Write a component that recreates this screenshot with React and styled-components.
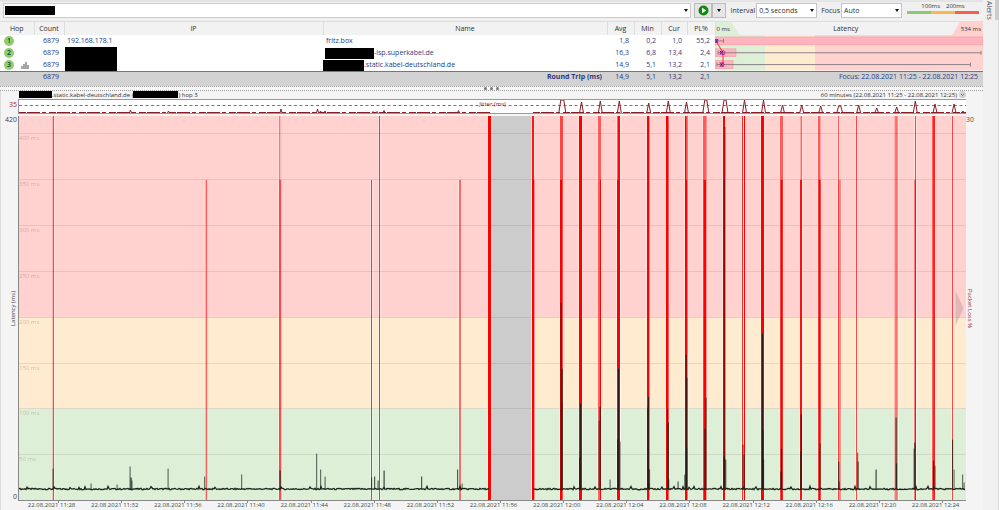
import * as React from 'react';
import styled, { createGlobalStyle } from 'styled-components';

const hops = [
    { hop: 1, ip: '192.168.178.1', name: 'fritz.box', avg: '1,8', min: '0,2', cur: '1,0', loss: '55,2' },
    { hop: 2, hidden: 49, indent: 2, name: '-isp.superkabel.de', avg: '16,3', min: '6,8', cur: '13,4', loss: '2,4' },
    { hop: 3, graph: true, hidden: 41, indent: 0, name: '.static.kabel-deutschland.de', avg: '14,9', min: '5,1', cur: '13,2', loss: '2,1' },
];

const times = [
    '11:28', '11:32', '11:36', '11:40', '11:44', '11:48', '11:52', '11:56',
    '12:00', '12:04', '12:08', '12:12', '12:16', '12:20', '12:24',
];

const levels = [400, 350, 300, 250, 200, 150, 100, 50];

// Packet loss bars: x, width, top, opacity
const losses = [
    [33.7, 1.3, 0, .7], [186.6, 1.6, 64, .6], [260.3, 1, 0, .7], [260.3, 2, 64, .6],
    [352, 1, 64, .8], [360, 1, 0, .8], [440, 2, 64, .55],
    [469, 3, 0, 1], [513, 2, 0, .9], [513, 2.4, 64, 1],
    [541, 3, 0, .7], [541, 2, 64, 1], [560, 3, 0, 1],
    [579, 3, 0, .6], [581, 1, 64, 1], [598, 3, 0, .6], [599, 2, 0, .9], [598, 3, 64, 1],
    [628, 2.4, 0, 1], [647, 2.6, 0, 1], [666, 1.6, 0, 1], [667.5, 1.5, 0, .5], [667, 1, 64, 1],
    [684, 3.6, 0, .6], [684.6, 2.4, 64, 1], [704, 2, 0, 1],
    [723, 1, 0, .8], [725, 1, 0, 1], [742, 3, 0, 1],
    [761, 3, 0, .6], [761.6, 2, 64, 1], [781.6, 1.2, 0, .7], [781, 2, 64, .9],
    [799, 2.5, 0, .6], [799.6, 2, 64, 1], [819, 1, 0, .6], [819, 3, 64, .4],
    [837, 1, 0, .7], [875.4, 3.6, 0, .4], [876.6, 1, 0, .4],
    [896, 1, 0, .7], [895.4, 1.6, 64, .8], [913, 3, 0, .6], [914.4, 1.4, 0, .9],
    [933, 1, 0, .7],
];

// Latency spikes: x, top, opacity
const spikes = [
    [34, 353, .6], [72, 368, .6], [98, 369, .6], [111, 351, .6], [112, 362, .9], [113, 365, .5],
    [149, 353, .6], [185.5, 361, .6], [222.5, 359, .6], [261, 355, .8], [297.5, 338, .6], [301.5, 354, .6], [306, 361, .6],
    [352.5, 362, .6], [355.5, 361, .7], [359, 365, .7], [365, 355, .8], [402.5, 361, .7], [438.5, 354, .7], [443, 368, .6],
    [542, 187, .6], [543.3, 253, .6], [542.6, 287, .7], [561.5, 288, .8], [560.5, 342, .7],
    [581, 291, .8], [580, 305, .5], [599.5, 253, .8], [598.5, 324, .7], [601, 326, .5], [591, 364, .6], [630, 368, .6],
    [629.5, 281, .8], [628.5, 292, .7], [630.4, 354, .6], [648.5, 293, .7], [649.3, 307, .7], [649.6, 364, .7], [659, 366, .7],
    [667, 239, .7], [667.8, 262, .7], [667.5, 332, .7], [665.6, 359, .6], [686, 313, .8], [687, 282, .6],
    [705, 64, .4], [706, 11, .5], [705, 341, .8], [706.6, 344, .7], [724, 329, .7], [725, 339, .7],
    [743.4, 218, .8], [743.8, 314, .7], [744.5, 344, .5], [762.4, 333, .8], [761.8, 356, .7],
    [782.2, 299, .8], [781.8, 336, .7], [801, 328, .6], [819.6, 346, .7], [820, 366, .7],
    [838.5, 337, .6], [839, 346, .7], [857, 354, .8], [877, 302, .7], [877.4, 348, .7], [895.8, 327, .8], [895, 333, .6],
    [914.4, 345, .7], [916, 350, .6], [933.5, 324, .7], [935, 354, .5], [943.5, 359, .6], [945, 367, .6],
];

// Jitter peaks: x, top, half of the width at the top
const peaks = [
    [34, 12, 0], [72, 12, 0], [111.5, 10, 0], [149.5, 11, 0], [186, 12, 0], [223, 12, 0], [262, 9, 0],
    [298.5, 9, 0], [301.5, 11, 0], [306, 11, 0], [354, 11.5, 0], [358, 11.5, 0], [365, 10.5, 0], [402, 12, 0], [439.5, 10.5, 0],
    [543.3, 0, 1.5], [562.5, 2, 0], [581.3, 1, 0], [600.3, 1, 0], [629.7, 3, 0], [649.3, 1, 0], [667.5, 2, 0],
    [686.8, 0, 1], [706, 0, 1], [725.5, 0, 0], [744.5, 0, 0], [763.5, 5, 0], [782.7, 5, 0], [801.7, 6, 0],
    [820.7, 6, 1], [839.7, 5, 0], [857.7, 8, 0], [877.7, 7, 0], [896.3, 1, 0], [916, 4, 0], [935, 4, 0], [944, 11, 0],
];

const noise = (x) => {
    const value = Math.sin(x * 12.9898) * 43758.5453;
    return value - Math.floor(value);
};

const baseline = (from, to) => {
    let path = `M${from} 373.5`;
    for (let x = from + 1; x <= to; x++) {
        const jump = noise(x + 500) > .97 ? 2 : 0;
        path += `L${x} ${(374.2 - noise(x) * 1.4 - jump).toFixed(1)}`;
    }
    return path;
};

const jitterLine = (list) => list.reduce((path, [x, top, flat]) => {
    const foot = top > 8 ? 1 : 2;
    return `${path}M${x - foot - flat} 13L${x - flat} ${top}H${x + flat}L${x + foot + flat} 13`;
}, '');

const App = () => (
    <Window>
        <GlobalStyle/>
        <Main>
            <Toolbar/>
            <TraceTable/>
            <Splitter><i/><i/><i/></Splitter>
            <Timeline/>
        </Main>
        <Sidebar>
            <AlertsTab type="button">Alerts</AlertsTab>
        </Sidebar>
    </Window>
);

export default App;

const Toolbar = () => (
    <Bar>
        <Address>
            <Redacted $width={50} $height={9}/>
            <AddressInput aria-label="Target"/>
            <Caret/>
        </Address>
        <Buttons>
            <ToolButton type="button" aria-label="Start" $width={18}>
                <svg width="11" height="11" viewBox="0 0 11 11">
                    <circle cx="5.5" cy="5.5" r="5" fill="#108a10"/>
                    <path d="M4 2.8L8.2 5.5L4 8.2Z" fill="#ffffff"/>
                </svg>
            </ToolButton>
            <ToolButton type="button" aria-label="Start options" $width={14}><Caret/></ToolButton>
        </Buttons>
        <Label htmlFor="interval">Interval</Label>
        <Field>
            <Select id="interval"><option>0,5 seconds</option></Select>
            <Caret/>
        </Field>
        <Label htmlFor="focus">Focus</Label>
        <Field>
            <Select id="focus"><option>Auto</option></Select>
            <Caret/>
        </Field>
        <Legend>
            <LegendTexts><span>100ms</span><span>200ms</span></LegendTexts>
            <LegendBar/>
        </Legend>
    </Bar>
);

const TraceTable = () => (
    <Table>
        <colgroup>
            <Col $width={34}/><Col $width={30}/><Col $width={259}/><col/>
            <Col $width={27}/><Col $width={27}/><Col $width={26}/><Col $width={28}/><Col $width={268}/>
        </colgroup>
        <thead>
            <tr>
                <Head>Hop</Head><Head>Count</Head><Head>IP</Head><Head>Name</Head>
                <Head>Avg</Head><Head>Min</Head><Head>Cur</Head><Head>PL%</Head>
                <Head>
                    <Scale>
                        <ScaleEnd>0 ms</ScaleEnd>
                        <span>Latency</span>
                        <ScaleEnd $high>534 ms</ScaleEnd>
                    </Scale>
                </Head>
            </tr>
        </thead>
        <tbody>
            { hops.map((row) =>
                <tr key={row.hop}>
                    <Cell>
                        <HopCell>
                            <Badge>{ row.hop }</Badge>
                            { row.graph &&
                                <svg width="8" height="7" viewBox="0 0 8 7" stroke="#777777" strokeWidth="1.3">
                                    <path d="M1 7V4M3 7V2M5 7V0M7 7V3"/>
                                </svg>
                            }
                        </HopCell>
                    </Cell>
                    <Cell $align="right">6879</Cell>
                    <Cell $pad={row.ip ? 3 : 1}>{ row.ip || <Redacted $width={52} $height={12}/> }</Cell>
                    <Cell $pad={row.hidden ? 0 : 3}>
                        <NameCell $indent={row.indent}>
                            { row.hidden && <Redacted $width={row.hidden} $height={11}/> }
                            { row.name }
                        </NameCell>
                    </Cell>
                    <Cell $align="right">{ row.avg }</Cell>
                    <Cell $align="right">{ row.min }</Cell>
                    <Cell $align="right">{ row.cur }</Cell>
                    <Cell $align="right">{ row.loss }</Cell>
                    { row.hop === 1 && <ChartCell rowSpan={3}><LatencyChart/></ChartCell> }
                </tr>
            )}
        </tbody>
        <tfoot>
            <tr>
                <Total/><Total>6879</Total><Total/>
                <Total $strong>Round Trip (ms)</Total>
                <Total>14,9</Total><Total>5,1</Total><Total>13,2</Total><Total>2,1</Total>
                <Total>Focus: 22.08.2021 11:25 - 22.08.2021 12:25</Total>
            </tr>
        </tfoot>
    </Table>
);

const LatencyChart = () => (
    <Drawing viewBox="0 0 268 36" preserveAspectRatio="none">
        <rect width="50" height="36" fill="#deefd7"/>
        <rect x="50" width="50" height="36" fill="#ffebcf"/>
        <rect x="100" width="168" height="36" fill="#ffd2d0"/>
        <g fill="#ffb3bf" stroke="#f59a9f" strokeWidth=".6">
            <rect x="0" y="2" width="268" height="8"/>
            <rect x="0" y="14" width="21" height="8"/>
            <rect x="0" y="26" width="18" height="8"/>
        </g>
        <path d="M0 6H8.5M8.5 4V8M3 18H266M3 16V20M266 16V20M2 30H255.5M2 28V32M255.5 28V32" stroke="#8c8088" fill="none"/>
        <path d="M1 6L8 18V30" stroke="#ff3030" fill="none"/>
        <path d="M0 4L3 8M3 4L0 8M5 16L8 20M8 16L5 20M5 28L8 32M8 28L5 32" stroke="#1717e0"/>
        <g fill="none" stroke="#d0208a"><circle cx="1" cy="6" r="1.5"/><circle cx="8" cy="18" r="2"/><circle cx="7" cy="30" r="2"/></g>
    </Drawing>
);

const Timeline = () => (
    <Graph>
        <Caption>
            <Redacted $width={33} $height={7}/>
            <span>.static.kabel-deutschland.de (</span>
            <Redacted $width={45} $height={7}/>
            <span>) hop 3</span>
            <Period>60 minutes (22.08.2021 11:25 - 22.08.2021 12:25)</Period>
            <Fold type="button" aria-label="Collapse">
                <svg width="7" height="7" viewBox="0 0 7 7">
                    <circle cx="3.5" cy="3.5" r="3.5" fill="#d2d2d2"/>
                    <path d="M2 3L3.5 4.5L5 3" stroke="#777777" fill="none"/>
                </svg>
            </Fold>
        </Caption>
        <JitterRow>
            <Gutter><Tick $red>35</Tick></Gutter>
            <Jitter>
                <Drawing viewBox="0 0 947 13" preserveAspectRatio="none">
                    <path d="M0 5.5H947" stroke="#777777" strokeDasharray="3 2.5"/>
                    <path d="M0 12.5H471M514 12.5H947" stroke="#8b1c24" strokeDasharray="7 1 13 2 4 3"/>
                    <path d={jitterLine(peaks)} stroke="#8b1c24" fill="none"/>
                </Drawing>
                <JitterName>Jitter (ms)</JitterName>
            </Jitter>
            <Gutter $right/>
        </JitterRow>
        <PlotRow>
            <Gutter>
                <Tick>420</Tick>
                <AxisName $up>Latency (ms)</AxisName>
                <Tick>0</Tick>
            </Gutter>
            <Plot>
                <Drawing viewBox="0 0 947 385" preserveAspectRatio="none">
                    <rect width="947" height="202" fill="#ffd2d0"/>
                    <rect y="202" width="947" height="91" fill="#ffebcf"/>
                    <rect y="293" width="947" height="92" fill="#deefd7"/>
                    <rect x="471" width="42" height="385" fill="#cccccc"/>
                    { losses.map(([x, width, top], i) =>
                        <rect key={i} x={x - .8} y={top} width={width + 1.6} height={385 - top} fill="#ffffff" opacity=".4"/>
                    )}
                    { losses.map(([x, width, top, opacity], i) =>
                        <rect key={i} x={x} y={top} width={width} height={385 - top} fill="#ff0000" opacity={opacity}/>
                    )}
                    { spikes.map(([x, top, opacity], i) =>
                        <rect key={i} x={x - .5} y={top} width="1.2" height={374 - top} fill="#101c14" opacity={opacity}/>
                    )}
                    <path d={baseline(0, 470)} stroke="#1c261c" fill="none" strokeWidth="1.3"/>
                    <path d={baseline(514, 946)} stroke="#1c261c" fill="none" strokeWidth="1.3"/>
                    <path d="M936.5 175L944.5 192.5L936.5 210Z" fill="#b99" opacity=".45"/>
                </Drawing>
                <Levels>
                    { levels.map((level) => <Level key={level}>{ level } ms</Level>) }
                </Levels>
            </Plot>
            <Gutter $right>
                <Tick $red>30</Tick>
                <AxisName $red>Packet Loss %</AxisName>
                <Tick/>
            </Gutter>
        </PlotRow>
        <Times>
            { times.map((time) => <Time key={time}>22.08.2021 { time }</Time>) }
        </Times>
    </Graph>
);

const GlobalStyle = createGlobalStyle`
    * {
        box-sizing: border-box;
    }

    body {
        margin: 0;
        background: #f0f0f0;
        font: 7px/10px "Open Sans", "Noto Sans", sans-serif;
        color: #303030;
    }

    button, input, select {
        font: inherit;
        color: inherit;
    }
`;

const Window = styled.div`
    display: flex;
    min-height: 100vh;
`;

const Main = styled.main`
    flex: 1;
    min-width: 0;
    display: flex;
    flex-direction: column;
`;

const Sidebar = styled.aside`
    width: 16px;
    border-right: 1px solid #dcdcdc;
`;

const AlertsTab = styled.button`
    display: block;
    width: 16px;
    height: 20px;
    padding: 0;
    border: 0;
    border-right: 4px solid #cccccc;
    background: none;
    color: #555555;
    writing-mode: vertical-rl;
    line-height: 12px;
`;

const Bar = styled.div`
    display: flex;
    align-items: center;
    height: 22px;
    padding: 0 3px 2px;
    border-top: 2px solid #e4e4e4;
    border-bottom: 1px solid #dddddd;
`;

const Address = styled.div`
    flex: 1;
    display: flex;
    align-items: center;
    height: 15px;
    padding: 0 2px 0 1px;
    border: 1px solid #cccccc;
    background: #ffffff;
`;

const AddressInput = styled.input`
    flex: 1;
    min-width: 0;
    height: 11px;
    border: 0;
    outline: 0;
    background: none;
`;

const Redacted = styled.span`
    flex: none;
    display: block;
    width: ${({ $width }) => $width}px;
    height: ${({ $height }) => $height}px;
    background: #000000;
`;

const Caret = styled.span`
    border: 2px solid transparent;
    border-top: 3px solid #111111;
    border-bottom: 0;
    pointer-events: none;
`;

const Buttons = styled.div`
    display: flex;
    margin-left: 3px;
`;

const ToolButton = styled.button`
    display: flex;
    align-items: center;
    justify-content: center;
    width: ${({ $width }) => $width}px;
    height: 15px;
    padding: 0;
    border: 1px solid #bbbbbb;
    background: #e6e6e6;
`;

const Label = styled.label`
    margin: 0 1px 0 4px;
`;

const Field = styled.div`
    display: flex;
    align-items: center;
    width: 61px;
    height: 15px;
    padding-right: 2px;
    border: 1px solid #c4c4c4;
    background: #ffffff;
`;

const Select = styled.select`
    appearance: none;
    flex: 1;
    min-width: 0;
    height: 12px;
    padding: 0 0 0 2px;
    border: 0;
    background: none;
`;

const Legend = styled.div`
    align-self: flex-start;
    width: 72px;
    margin: 0 1px 0 5px;
`;

const LegendTexts = styled.div`
    display: flex;
    justify-content: center;
    gap: 6px;
    font-size: 6px;
    line-height: 9px;
`;

const LegendBar = styled.div`
    height: 3px;
    background: linear-gradient(to right, #8fc96f 33%, #f8b84c 33% 66%, #f8604c 66%);
`;

const Table = styled.table`
    width: 100%;
    table-layout: fixed;
    border-collapse: collapse;
    background: #ffffff;
    color: #2b3a80;
`;

const Col = styled.col`
    width: ${({ $width }) => $width}px;
`;

const Head = styled.th`
    height: 13px;
    padding: 0;
    border-right: 1px solid #dddddd;
    background: #f2f2f2;
    color: #303030;
    font-weight: normal;

    &:last-child {
        border: 0;
    }
`;

const Scale = styled.div`
    display: flex;
    align-items: center;
    justify-content: space-between;
    line-height: 11px;
`;

const ScaleEnd = styled.span`
    width: ${({ $high }) => $high ? 31 : 24}px;
    height: 13px;
    padding: ${({ $high }) => $high ? '2px 2px 0 0' : '2px 0 0 1px'};
    background: ${({ $high }) => $high ? '#ffd2d0' : '#deefd7'};
    clip-path: ${({ $high }) => $high ? 'polygon(8px 0, 100% 0, 100% 100%, 0 100%)' : 'polygon(0 0, 16px 0, 100% 100%, 0 100%)'};
    font-size: 6px;
    text-align: ${({ $high }) => $high ? 'right' : 'left'};
    white-space: nowrap;
`;

const Cell = styled.td`
    height: 12px;
    padding: 0 5px 0 ${({ $pad = 3 }) => $pad}px;
    line-height: 12px;
    text-align: ${({ $align = 'left' }) => $align};
    white-space: nowrap;
`;

const HopCell = styled.div`
    display: flex;
    align-items: center;
    gap: 7px;
    padding-left: 1px;
`;

const Badge = styled.span`
    width: 10px;
    height: 10px;
    border-radius: 50%;
    background: #8fce6c;
    color: #22403c;
    font-weight: 600;
    line-height: 10px;
    text-align: center;
`;

const NameCell = styled.div`
    display: flex;
    align-items: center;
    margin-left: ${({ $indent = 0 }) => $indent}px;
`;

const ChartCell = styled.td`
    height: 36px;
    padding: 0;
`;

const Drawing = styled.svg`
    display: block;
    width: 100%;
    height: 100%;
`;

const Total = styled.td`
    height: 14px;
    padding: 0 5px 0 0;
    border-top: 1px solid #777777;
    background: #d2d2d2;
    font-weight: ${({ $strong }) => $strong ? 'bold' : 'normal'};
    line-height: 10px;
    text-align: right;
    vertical-align: top;
    white-space: nowrap;
`;

const Splitter = styled.div`
    display: flex;
    align-items: center;
    justify-content: center;
    gap: 3px;
    height: 5px;
    border: 1px dotted #999999;
    border-width: 1px 0;
    background: #f6f6f6;

    i {
        width: 3px;
        height: 3px;
        border-radius: 50%;
        background: #777777;
    }
`;

const Graph = styled.section`
    flex: 1;
    display: flex;
    flex-direction: column;
    border-left: 1px solid #dddddd;
    background: #f4f4f4;
`;

const Caption = styled.header`
    display: flex;
    align-items: center;
    height: 8px;
    padding: 0 17px 0 18px;
    font-size: 6px;
    line-height: 8px;
    white-space: nowrap;
`;

const Period = styled.span`
    margin-left: auto;
`;

const Fold = styled.button`
    display: flex;
    margin-left: 2px;
    padding: 0;
    border: 0;
    background: none;
`;

const JitterRow = styled.div`
    display: flex;
    height: 15px;
    margin-bottom: 2px;
`;

const PlotRow = styled.div`
    flex: 1;
    display: flex;
    min-height: 200px;
`;

const Gutter = styled.div`
    flex: none;
    display: flex;
    flex-direction: column;
    justify-content: space-between;
    align-items: ${({ $right }) => $right ? 'flex-start' : 'flex-end'};
    width: 17px;
    padding-right: ${({ $right }) => $right ? 0 : 1}px;
`;

const Tick = styled.span`
    min-height: 8px;
    color: ${({ $red }) => $red ? '#b02832' : '#404040'};
    line-height: 8px;

    ${JitterRow} & {
        padding-top: 2px;
    }
`;

const AxisName = styled.span`
    color: ${({ $red }) => $red ? '#b02832' : '#404040'};
    font-size: 6px;
    line-height: 8px;
    writing-mode: vertical-rl;
    white-space: nowrap;
    transform: ${({ $up }) => $up ? 'rotate(180deg)' : 'none'};
`;

const Jitter = styled.div`
    position: relative;
    flex: 1;
    border: 1px solid #999999;
    border-right: 0;
    background: #ffffff;
`;

const JitterName = styled.span`
    position: absolute;
    inset: 0;
    color: #8b1c24;
    font-size: 6px;
    line-height: 8px;
    text-align: center;
`;

const Plot = styled.div`
    position: relative;
    flex: 1;
    border-left: 1px solid #888888;
    border-bottom: 1px solid #888888;

    svg {
        position: absolute;
        inset: 0;
    }
`;

const Levels = styled.div`
    position: absolute;
    inset: 0;
    display: flex;
    flex-direction: column;

    &::before {
        content: "";
        flex: 20 0 0;
    }
`;

const Level = styled.span`
    flex: 50 0 0;
    border-top: 1px solid rgba(90, 60, 60, .12);
    color: rgba(90, 60, 60, .32);
    font-size: 6px;
    line-height: 8px;
`;

const Times = styled.div`
    display: flex;
    margin: 0 17px 0 18px;
    height: 9px;
`;

const Time = styled.span`
    flex: 1;
    padding-left: 2px;
    color: #365040;
    font-size: 6px;
    line-height: 9px;
    text-align: center;
    white-space: nowrap;
    background: linear-gradient(#888888, #888888) 39px 0 / 1px 2px no-repeat;
`;
